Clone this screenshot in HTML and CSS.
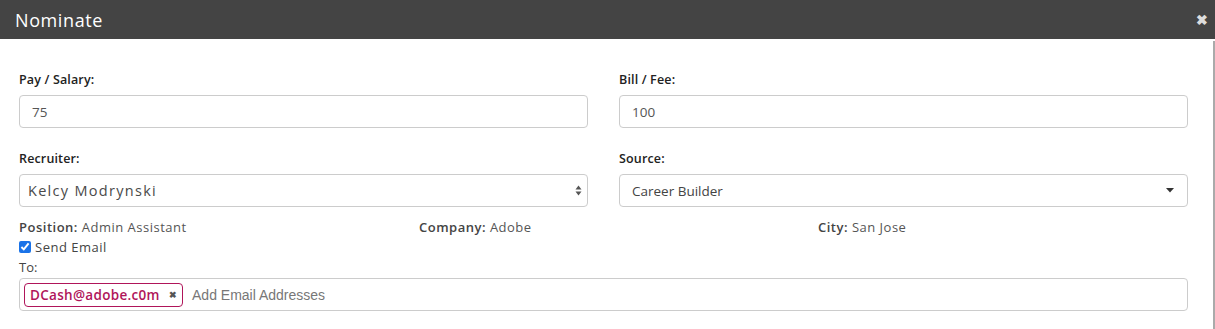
FILE: index.html
```html
<!DOCTYPE html>
<html lang="en">
<head>
    <meta charset="UTF-8">
    <meta name="viewport" content="width=device-width, initial-scale=1.0">
    <title>Nominate</title>
    <link rel="stylesheet" href="styles.css">
</head>
<body>
    <div class="modal">
        <div class="modal-header">
            <span class="modal-title">Nominate</span>
            <span class="close">&#10006;</span>
        </div>
        <div class="modal-body">
            <div class="row">
                <div class="field">
                    <label>Pay / Salary:</label>
                    <div class="input">75</div>
                </div>
                <div class="field">
                    <label>Bill / Fee:</label>
                    <div class="input">100</div>
                </div>
            </div>
            <div class="row">
                <div class="field">
                    <label>Recruiter:</label>
                    <div class="input select-native">
                        Kelcy Modrynski
                        <svg class="updown" width="7" height="11" viewBox="0 0 7 11"><path d="M3.5 0.5 L6.5 4.5 H0.5 Z M3.5 10.5 L6.5 6.5 H0.5 Z" fill="#555"/></svg>
                    </div>
                </div>
                <div class="field">
                    <label>Source:</label>
                    <div class="input select-fancy">
                        Career Builder
                        <svg class="caret" width="8" height="5" viewBox="0 0 8 5"><path d="M0 0 H8 L4 4.5 Z" fill="#333"/></svg>
                    </div>
                </div>
            </div>
            <div class="info">
                <div><b>Position:</b> Admin Assistant</div>
                <div><b>Company:</b> Adobe</div>
                <div><b>City:</b> San Jose</div>
            </div>
            <div class="send">
                <input type="checkbox" checked> Send Email
            </div>
            <div class="to">To:</div>
            <div class="input tags">
                <span class="tag">DCash@adobe.c0m <span class="tag-x">&#10006;</span></span>
                <span class="placeholder">Add Email Addresses</span>
            </div>
        </div>
    </div>
</body>
</html>
```

FILE: styles.css
```css
body {
    margin: 0;
    background: #fff;
    font-family: "Open Sans", "Liberation Sans", sans-serif;
    color: #333;
    overflow: hidden;
}
.modal-header {
    height: 39px;
    background: #444444;
    color: #fff;
    display: flex;
    align-items: center;
    justify-content: space-between;
    padding: 0 7px 0 15px;
}
.modal-title {
    font-size: 18px;
    letter-spacing: 0.6px;
}
.close {
    font-size: 14px;
    color: #ddd;
    font-weight: bold;
}
.modal-body {
    margin-top: 2px;
    padding: 30px 25px 0 19px;
    height: 288px;
    box-sizing: border-box;
    overflow: hidden;
    border-right: 2px solid #aaa;
}
.row {
    display: grid;
    grid-template-columns: 1fr 1fr;
    gap: 31px;
    margin-bottom: 22px;
}
.row + .row {
    margin-bottom: 17px;
}
label {
    display: block;
    font-size: 12.5px;
    font-weight: 600;
    letter-spacing: 0.15px;
    color: #222;
    margin-bottom: 7px;
}
.input {
    height: 33px;
    box-sizing: border-box;
    border: 1px solid #ccc;
    border-radius: 4px;
    display: flex;
    align-items: center;
    padding: 0 12px;
    font-size: 13.5px;
    color: #555;
}
.select-native, .select-fancy {
    justify-content: space-between;
}
.select-native {
    padding-left: 8px;
    padding-right: 5px;
    color: #4a4a4a;
    font-size: 14.5px;
    letter-spacing: 1.3px;
}
.select-fancy {
    padding-right: 13px;
    color: #444;
}
.info {
    display: grid;
    grid-template-columns: 400px 399px 1fr;
    font-size: 13px;
    letter-spacing: 0.5px;
    color: #555;
    margin-top: -6px;
}
.info b {
    font-weight: 600;
    color: #444;
}
.send {
    display: flex;
    align-items: center;
    font-size: 13px;
    letter-spacing: 0.5px;
    color: #444;
    margin-top: 2px;
}
.send input {
    margin: 0 4px 0 0;
    width: 12px;
    height: 12px;
    accent-color: #1a73e8;
}
.to {
    font-size: 13px;
    color: #444;
    margin-top: 2px;
    margin-bottom: 2px;
}
.tags {
    padding: 0 4px;
    gap: 9px;
}
.tag {
    border: 1px solid #b0155a;
    border-radius: 4px;
    color: #b0155a;
    font-size: 13.5px;
    font-weight: 600;
    letter-spacing: 0.3px;
    padding: 1px 5px;
    height: 24px;
    box-sizing: border-box;
    display: flex;
    align-items: center;
}
.tag-x {
    color: #555;
    font-size: 9px;
    margin-left: 9px;
}
.placeholder {
    font-family: "Liberation Sans", Arial, sans-serif;
    font-size: 14px;
    color: #777;
}
```
